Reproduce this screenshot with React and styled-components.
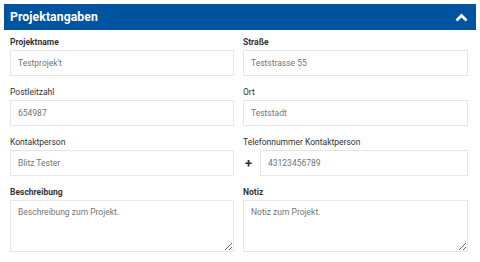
import React from 'react';
import styled, { createGlobalStyle } from 'styled-components';

const GlobalStyle = createGlobalStyle`
  body {
    margin: 0;
    background: #fff;
    font-family: Roboto, "Liberation Sans", sans-serif;
  }
`;

const Panel = styled.div`
  padding: 4px 4px 0 4px;
`;

const Header = styled.div`
  display: flex;
  align-items: center;
  justify-content: space-between;
  height: 26px;
  padding: 0 8px 0 6px;
  background: #00549f;
  color: #fff;
`;

const Title = styled.h2`
  margin: 0;
  font-size: 12.2px;
  font-weight: 700;
  letter-spacing: 0.1px;
`;

const Form = styled.div`
  display: grid;
  grid-template-columns: 224px 225px;
  column-gap: 9px;
  row-gap: 11px;
  padding: 7px 8px 0 6px;
`;

const Field = styled.div`
  display: flex;
  flex-direction: column;
`;

const Label = styled.label`
  font-size: 8.5px;
  font-weight: ${(props) => (props.strong ? 700 : 400)};
  color: #333;
  line-height: 10px;
  margin-bottom: 3px;
`;

const InputRow = styled.div`
  display: flex;
  align-items: center;
`;

const Prefix = styled.span`
  width: 15px;
  font-size: 13px;
  font-weight: 700;
  color: #333;
  line-height: 1;
  padding-left: 2px;
`;

const Input = styled.input`
  flex: 1;
  min-width: 0;
  height: 26px;
  box-sizing: border-box;
  border: 1px solid #e6e6e6;
  padding: 0 7px;
  font-family: inherit;
  font-size: 8.5px;
  color: #757575;
  outline: none;
`;

const TextArea = styled.textarea`
  height: 52px;
  box-sizing: border-box;
  border: 1px solid #e6e6e6;
  padding: 6px 7px;
  font-family: inherit;
  font-size: 8.5px;
  color: #757575;
  outline: none;
  resize: vertical;
`;

const ChevronUp = () => (
  <svg width="13" height="9" viewBox="0 0 13 9">
    <polyline points="1.5,7.5 6.5,2.5 11.5,7.5" fill="none" stroke="#fff" strokeWidth="2.8" />
  </svg>
);

const fields = [
  { label: 'Projektname', value: "Testprojek't", strong: true },
  { label: 'Straße', value: 'Teststrasse 55', strong: true },
  { label: 'Postleitzahl', value: '654987' },
  { label: 'Ort', value: 'Teststadt' },
  { label: 'Kontaktperson', value: 'Blitz Tester' },
  { label: 'Telefonnummer Kontaktperson', value: '43123456789', prefix: '+' },
  { label: 'Beschreibung', value: 'Beschreibung zum Projekt.', area: true, strong: true },
  { label: 'Notiz', value: 'Notiz zum Projekt.', area: true, strong: true },
];

export default function App() {
  return (
    <>
      <GlobalStyle />
      <Panel>
        <Header>
          <Title>Projektangaben</Title>
          <ChevronUp />
        </Header>
        <Form>
          {fields.map((f) => (
            <Field key={f.label}>
              <Label strong={f.strong}>{f.label}</Label>
              {f.area ? (
                <TextArea defaultValue={f.value} />
              ) : (
                <InputRow>
                  {f.prefix && <Prefix>{f.prefix}</Prefix>}
                  <Input defaultValue={f.value} />
                </InputRow>
              )}
            </Field>
          ))}
        </Form>
      </Panel>
    </>
  );
}
